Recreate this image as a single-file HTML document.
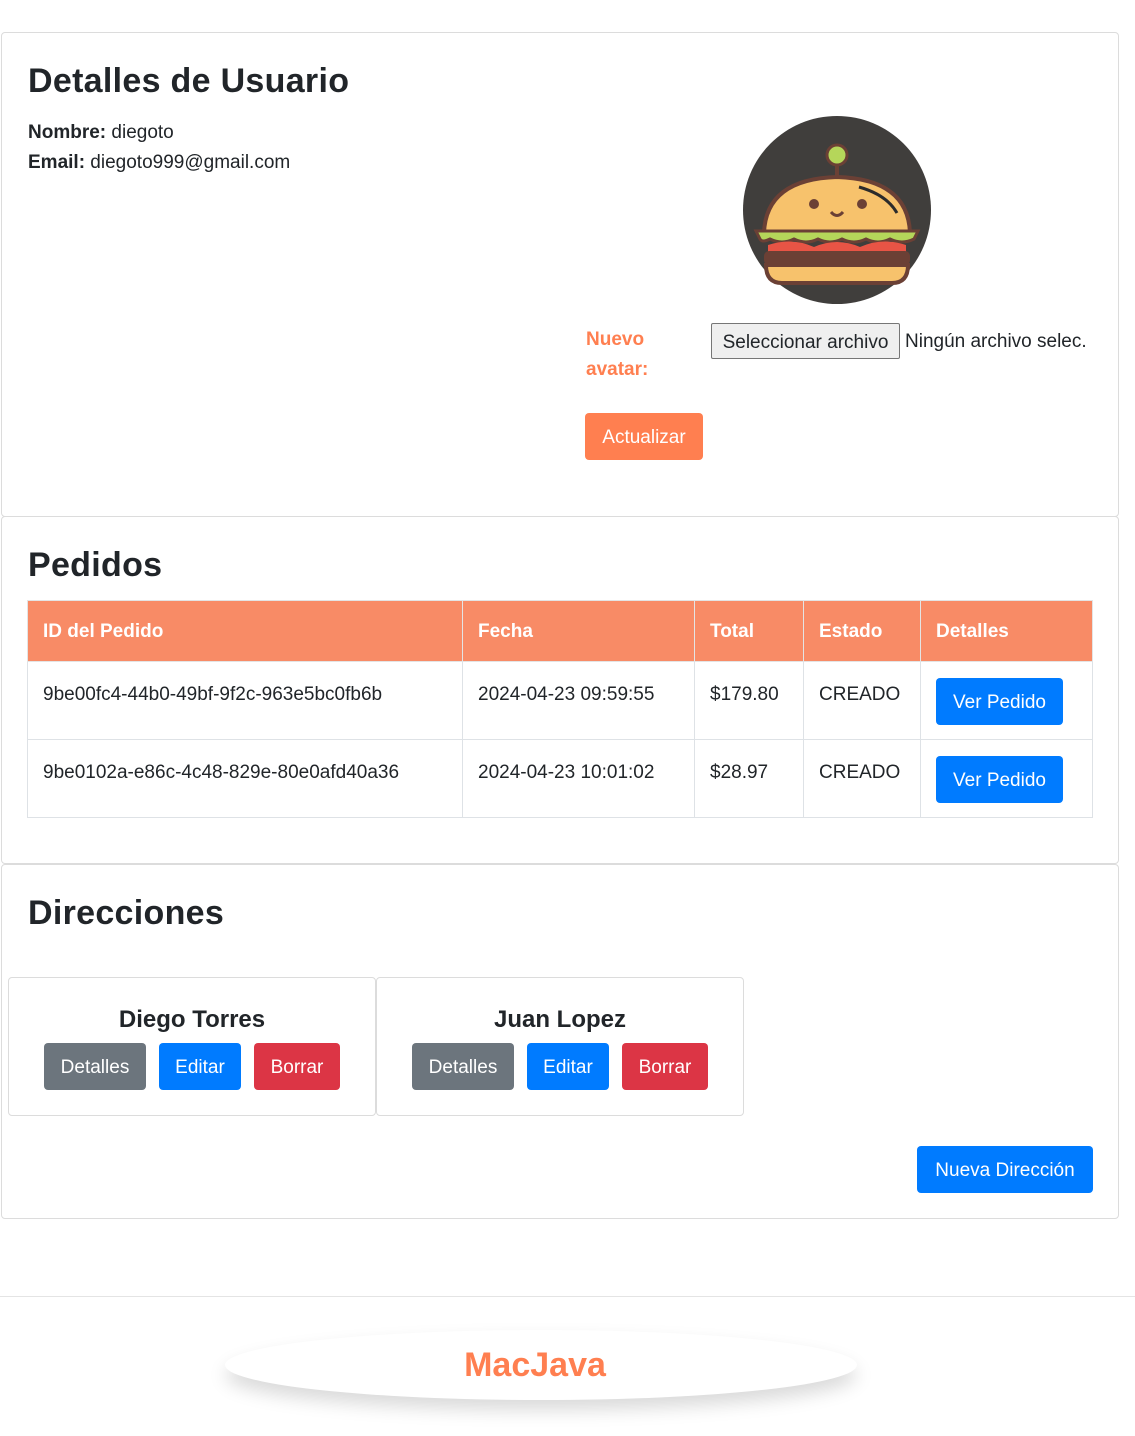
<!DOCTYPE html>
<html><head><meta charset="utf-8"><style>
*{box-sizing:border-box}
body{margin:0;background:#fff;font-family:"Liberation Sans",sans-serif;color:#212529;font-size:19px;width:1135px;height:1436px;position:relative;overflow:hidden}
.card{position:absolute;left:1px;width:1118px;border:1px solid #dcdcdc;border-radius:4px}
h2{position:absolute;left:26px;margin:0;font-size:34px;font-weight:bold;letter-spacing:0.3px}
.btn{position:absolute;color:#fff;border-radius:4px;font-size:19px;display:flex;align-items:center;justify-content:center;height:47px;padding-top:3px}
.blue{background:#007bff}.gray{background:#6c757d}.red{background:#dc3545}
table{position:absolute;left:25px;top:83px;width:1066px;border-collapse:collapse}
th{background:#f88b66;color:#fff;text-align:left;height:61px;padding:2px 15px 0;font-size:19px;border:1px solid #e4e4e4}
td{border:1px solid #dee2e6;vertical-align:top;padding:22px 15px 0;height:78px}
.addr{position:absolute;top:112px;width:368px;height:139px;border:1px solid #dcdcdc;border-radius:4px}
.addr b{position:absolute;top:28px;left:0;right:0;text-align:center;font-size:24px}
</style></head><body>
<div class="card" style="top:32px;height:485px">
<h2 style="top:29px">Detalles de Usuario</h2>
<div style="position:absolute;left:26px;top:85px;line-height:30px"><b>Nombre:</b> diegoto<br><b>Email:</b> diegoto999@gmail.com</div>
<svg style="position:absolute;left:740px;top:82px" width="190" height="190" viewBox="0 0 190 190">
<circle cx="95" cy="95" r="94" fill="#403e3c"/>
<line x1="95" y1="30" x2="95" y2="62" stroke="#6b4035" stroke-width="4"/>
<circle cx="95" cy="40" r="10" fill="#b5d65a" stroke="#6b4035" stroke-width="3"/>
<path d="M22 118 Q24 64 95 62 Q166 64 168 118 Z" fill="#f7c26c" stroke="#6b4035" stroke-width="4"/>
<path d="M117 72 Q145 80 155 98" stroke="#2b2b2b" stroke-width="3" fill="none"/>
<circle cx="72" cy="89" r="5" fill="#6b4035"/><circle cx="120" cy="89" r="5" fill="#6b4035"/>
<path d="M89 97 Q95 104 101 97" stroke="#6b4035" stroke-width="3" fill="none"/>
<path d="M14 116 L176 116 L172 124 Q160 130 148 124 Q136 130 124 124 Q112 130 100 124 Q88 130 76 124 Q64 130 52 124 Q40 130 28 124 Q20 128 18 124 Z" fill="#b5d65a" stroke="#6b4035" stroke-width="3"/>
<path d="M26 130 Q50 122 72 132 Q95 122 118 132 Q140 122 164 130 L164 138 L26 138 Z" fill="#e85445"/>
<rect x="22" y="136" width="146" height="14" rx="5" fill="#6b4035"/>
<path d="M24 150 L166 150 Q166 168 150 168 L40 168 Q24 168 24 150 Z" fill="#f7c26c" stroke="#6b4035" stroke-width="4"/>
</svg>
<div style="position:absolute;left:584px;top:292px;color:#ff7f50;font-weight:bold;line-height:30px;font-size:19px">Nuevo<br>avatar:</div>
<div style="position:absolute;left:709px;top:290px;width:189px;height:36px;border:1px solid #767676;background:#efefef;border-radius:2px;font-size:19px;display:flex;align-items:center;justify-content:center;padding-top:3px">Seleccionar archivo</div>
<div style="position:absolute;left:903px;top:298px">Ningún archivo selec.</div>
<div class="btn" style="left:583px;top:380px;width:118px;background:#ff7f50">Actualizar</div>
</div>
<div class="card" style="top:516px;height:348px">
<h2 style="top:29px">Pedidos</h2>
<table><tr><th style="width:435px">ID del Pedido</th><th style="width:232px">Fecha</th><th style="width:109px">Total</th><th style="width:117px">Estado</th><th>Detalles</th></tr>
<tr><td>9be00fc4-44b0-49bf-9f2c-963e5bc0fb6b</td><td>2024-04-23 09:59:55</td><td>$179.80</td><td>CREADO</td><td style="position:relative"><div class="btn blue" style="left:15px;top:16px;width:127px">Ver Pedido</div></td></tr>
<tr><td>9be0102a-e86c-4c48-829e-80e0afd40a36</td><td>2024-04-23 10:01:02</td><td>$28.97</td><td>CREADO</td><td style="position:relative"><div class="btn blue" style="left:15px;top:16px;width:127px">Ver Pedido</div></td></tr>
</table>
</div>
<div class="card" style="top:864px;height:355px">
<h2 style="top:29px">Direcciones</h2>
<div class="addr" style="left:6px"><b>Diego Torres</b><div class="btn gray" style="left:35px;top:65px;width:102px">Detalles</div><div class="btn blue" style="left:150px;top:65px;width:82px">Editar</div><div class="btn red" style="left:245px;top:65px;width:86px">Borrar</div></div>
<div class="addr" style="left:374px"><b>Juan Lopez</b><div class="btn gray" style="left:35px;top:65px;width:102px">Detalles</div><div class="btn blue" style="left:150px;top:65px;width:82px">Editar</div><div class="btn red" style="left:245px;top:65px;width:86px">Borrar</div></div>
<div class="btn blue" style="left:915px;top:281px;width:176px">Nueva Dirección</div>
</div>
<div style="position:absolute;left:0;right:0;top:1296px;border-top:1px solid #e4e4e4"></div>
<div style="position:absolute;left:225px;top:1330px;width:632px;height:70px;border-radius:50%;background:#fff;box-shadow:0 10px 18px rgba(0,0,0,0.15);display:flex;align-items:center;justify-content:center;color:#ff7f50;font-weight:bold;font-size:34px;padding-right:12px">MacJava</div>
</body></html>
